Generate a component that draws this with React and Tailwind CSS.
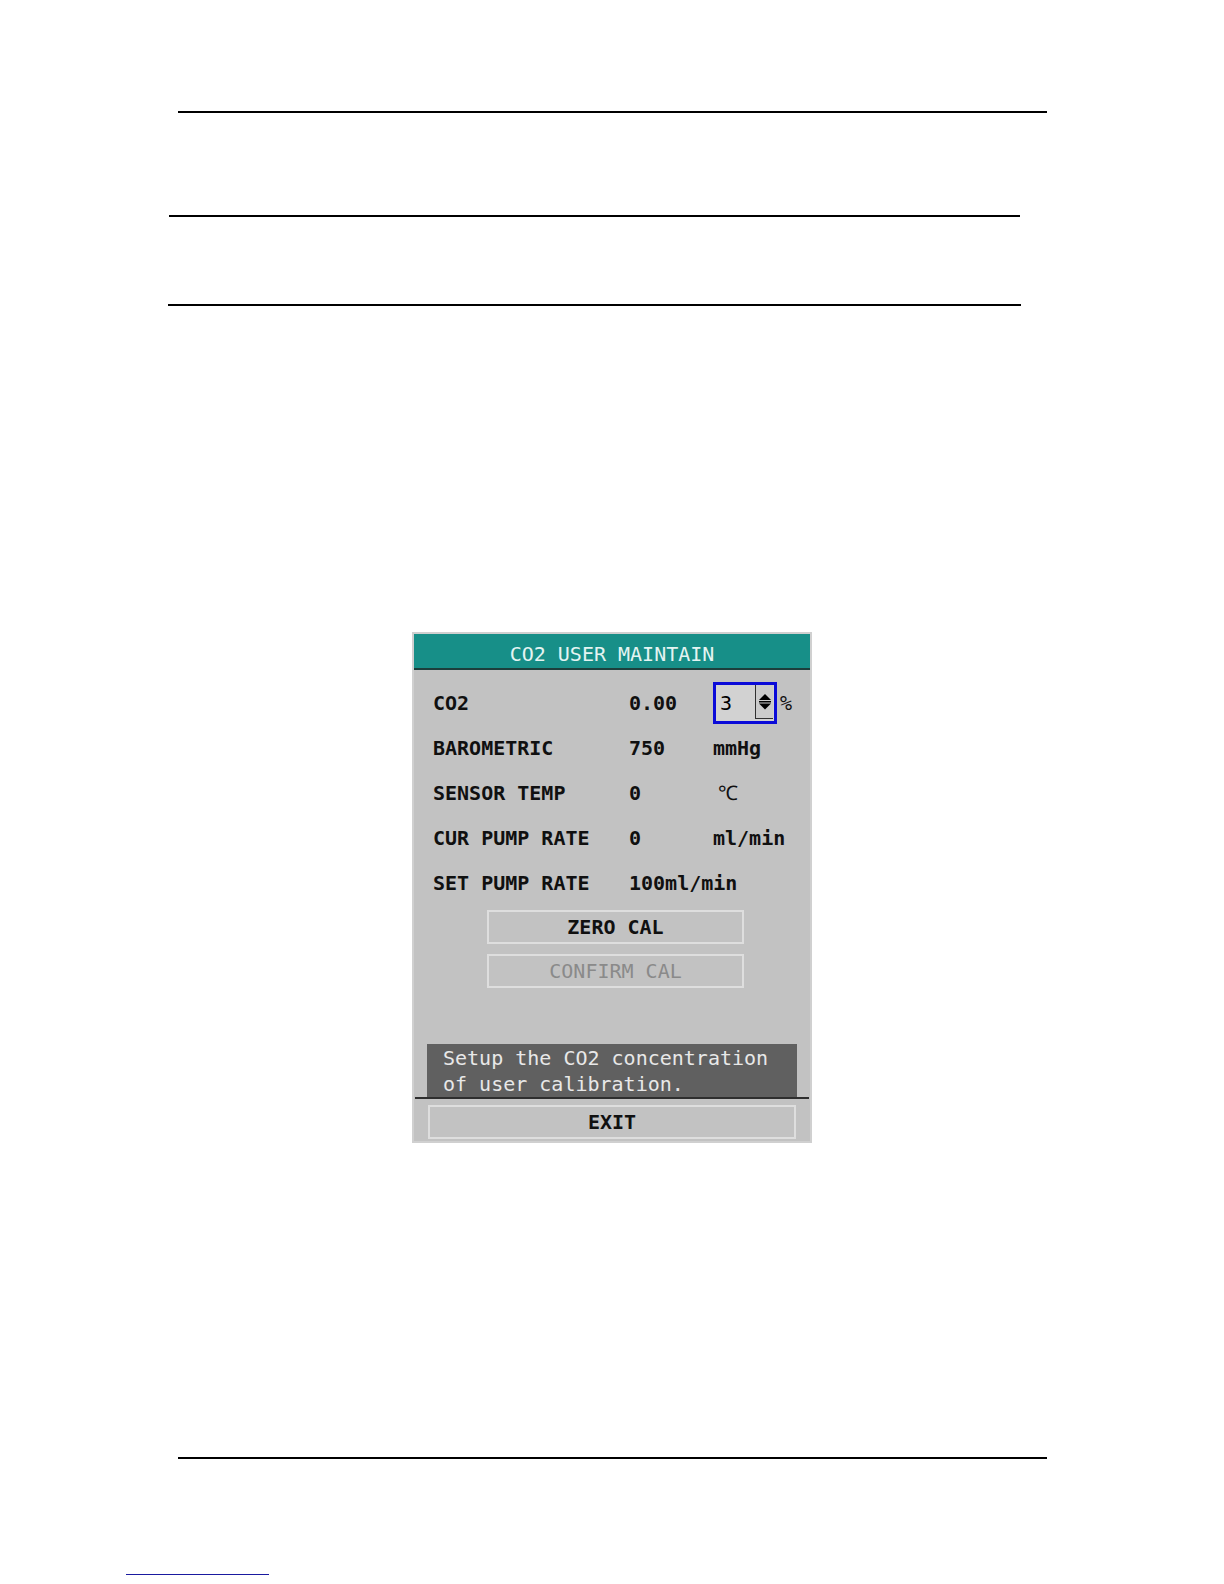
import React from "react";

const MONO = "font-['DejaVu_Sans_Mono','Liberation_Mono',monospace]";

function Row({ label, value, unit, children }) {
  return (
    <div className="grid grid-cols-[196px_84px_1fr] h-[45px] items-center leading-[45px]">
      <div className="font-bold text-[#101010] whitespace-pre">{label}</div>
      <div className="font-bold text-[#101010] whitespace-pre">{value}</div>
      <div className="font-bold text-[#101010] whitespace-pre flex items-center">{children || unit}</div>
    </div>
  );
}

function SpinBox() {
  return (
    <div className="flex items-center">
      <div className="relative w-[64px] h-[42px] border-[3px] border-[#0a0ad8] bg-[#d2d2d2] mt-[-2px]">
        <div className="pl-[4px] leading-[36px] font-normal text-black">3</div>
        <div className="absolute right-[1px] top-0 bottom-[2px] w-[18px] border-l border-b border-[#303030] bg-[#cbcbcb] flex items-center justify-center">
          <svg width="16" height="33" viewBox="0 0 16 33">
            <polygon points="2,15 14,15 8,9" fill="#000" />
            <rect x="2" y="16" width="12" height="1.5" fill="#000" />
            <polygon points="2,18.5 14,18.5 8,24.5" fill="#000" />
          </svg>
        </div>
      </div>
      <span className="ml-[3px] font-normal text-[#101010]">%</span>
    </div>
  );
}

function Btn({ children, disabled, className = "" }) {
  return (
    <div
      className={
        "h-[34px] border-2 border-[#dedede] flex items-center justify-center leading-[30px] " +
        (disabled ? "text-[#8a8a8a] font-normal " : "text-[#101010] font-bold ") +
        className
      }
    >
      {children}
    </div>
  );
}

export default function App() {
  return (
    <div className="w-[1224px] h-[1584px] bg-white overflow-hidden">
      <div className="h-[111px]" />
      <div className="ml-[178px] w-[869px] h-[2px] bg-black" />
      <div className="mt-[102px] ml-[169px] w-[851px] h-[2px] bg-black" />
      <div className="mt-[87px] ml-[168px] w-[853px] h-[2px] bg-black" />

      <div className={"mt-[326px] ml-[412px] w-[400px] h-[511px] border-2 border-[#d0d0d0] bg-[#c2c2c2] flex flex-col text-[20px] " + MONO}>
        <div className="h-[34px] bg-[#178f88] text-[#e4f4f2] text-center pt-[7px] leading-[27px] whitespace-pre">
          CO2 USER MAINTAIN
        </div>
        <div className="h-[2px] bg-[#1c3f3c]" />

        <div className="pt-[11px] pl-[19px]">
          <Row label="CO2" value="0.00">
            <SpinBox />
          </Row>
          <Row label="BAROMETRIC" value="750" unit="mmHg" />
          <Row label="SENSOR TEMP" value="0">
            <span className="ml-[5px] font-normal">℃</span>
          </Row>
          <Row label="CUR PUMP RATE" value="0" unit="ml/min" />
          <Row label="SET PUMP RATE" value="100ml/min" unit="" />
        </div>

        <Btn className="mt-[4px] ml-[73px] w-[257px]">ZERO CAL</Btn>
        <Btn disabled className="mt-[10px] ml-[73px] w-[257px]">CONFIRM CAL</Btn>

        <div className="mt-[56px] ml-[13px] w-[370px] h-[53px] bg-[#606060] text-[#e8e8e8] pl-[16px] pt-[1px] leading-[26px] whitespace-pre">
          <div>Setup the CO2 concentration</div>
          <div>of user calibration.</div>
        </div>
        <div className="mx-[1px] h-[2px] bg-[#2e2e2e]" />
        <Btn className="mt-[6px] ml-[14px] w-[368px]">EXIT</Btn>
      </div>

      <div className="mt-[314px] ml-[178px] w-[869px] h-[2px] bg-black" />
      <div className="mt-[115px] ml-[126px] w-[143px] h-[1px] bg-[#1a1aa0]" />
    </div>
  );
}
